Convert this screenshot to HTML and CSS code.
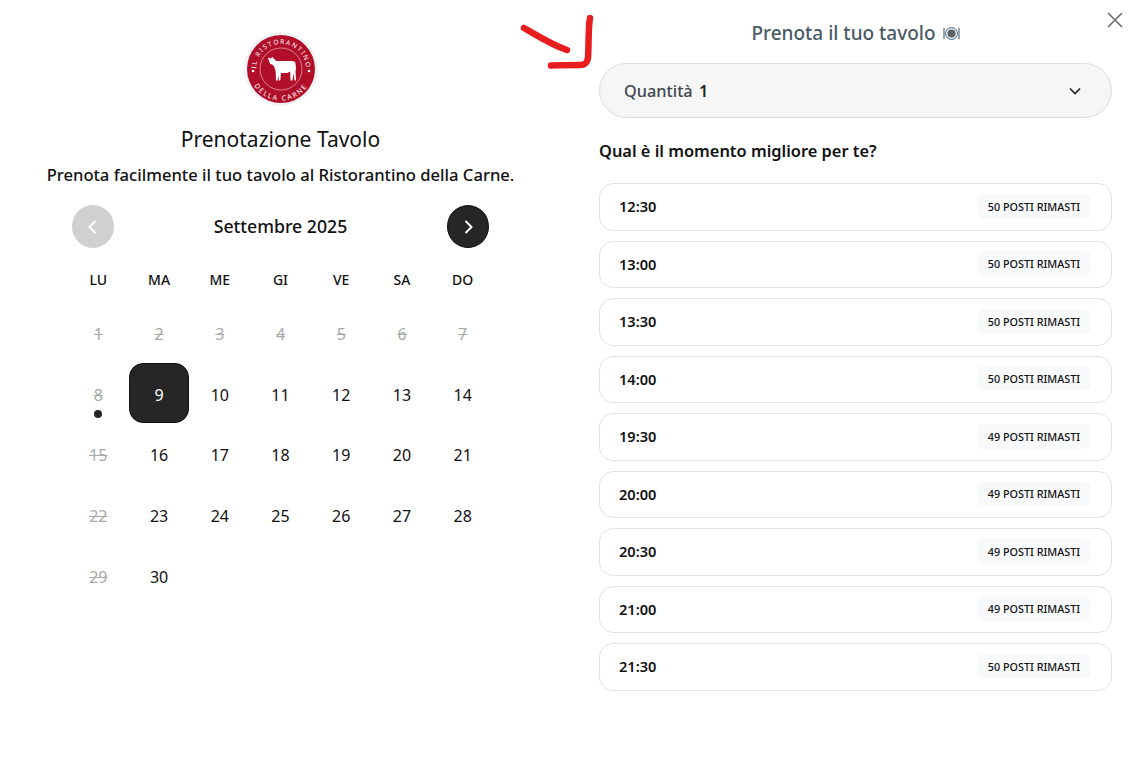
FILE: index.html
```html
<!DOCTYPE html>
<html lang="it">
<head>
<meta charset="UTF-8" />
<meta name="viewport" content="width=device-width, initial-scale=1" />
<title>Prenotazione Tavolo</title>
<link rel="stylesheet" href="styles.css">
</head>
<body>
  <main class="booking">
    <section class="intro">
      <svg class="logo" viewBox="0 0 74 74" role="img" aria-label="Il Ristorantino della Carne">
        <defs>
          <path id="arc-top" d="M12 37a25 25 0 0 1 50 0" />
          <path id="arc-bottom" d="M5.5 37a31.5 31.5 0 0 0 63 0" />
        </defs>
        <circle cx="37" cy="37" r="37" fill="#f0f2f3" />
        <circle cx="37" cy="37" r="34" fill="#b10e2a" />
        <circle cx="37" cy="37" r="21" fill="none" stroke="#eab4bc" stroke-width=".7" />
        <text class="logo-text"><textPath href="#arc-top" startOffset="50%" text-anchor="middle">IL RISTORANTINO</textPath></text>
        <text class="logo-text logo-text-low"><textPath href="#arc-bottom" startOffset="50%" text-anchor="middle">DELLA CARNE</textPath></text>
        <circle cx="9" cy="39" r="1.3" fill="#fff" />
        <circle cx="65" cy="39" r="1.3" fill="#fff" />
        <path fill="#fff" d="M24 25.5l2.5 1 2-1.5 1 1.5 3 2.5H48q3 0 3.5 2l.5 6-.5 2 .5 9.5h-1.5l-1-7-1 7h-2l-.3-9-3 1.5H37l-.7 7.5h-1.5l-.5-5-.7 5h-1.6l-.3-9-1.5-5-2-2-2-.5-1-2.5-.5-1.500z" />
      </svg>
      <h1 class="intro-title">Prenotazione Tavolo</h1>
      <p class="intro-text">Prenota facilmente il tuo tavolo al Ristorantino della Carne.</p>

      <div class="calendar">
        <div class="calendar-head">
          <button type="button" class="nav-btn nav-btn-off" aria-label="Mese precedente">
            <svg viewBox="0 0 24 24"><path d="M14.5 6l-6 6 6 6" /></svg>
          </button>
          <span class="month">Settembre 2025</span>
          <button type="button" class="nav-btn" aria-label="Mese successivo">
            <svg viewBox="0 0 24 24"><path d="M9.5 6l6 6-6 6" /></svg>
          </button>
        </div>
        <div class="weekdays">
          <span>LU</span><span>MA</span><span>ME</span><span>GI</span><span>VE</span><span>SA</span><span>DO</span>
        </div>
        <div class="days">
          <span class="day day-off">1</span>
          <span class="day day-off">2</span>
          <span class="day day-off">3</span>
          <span class="day day-off">4</span>
          <span class="day day-off">5</span>
          <span class="day day-off">6</span>
          <span class="day day-off">7</span>
          <span class="day day-off day-today">8</span>
          <span class="day day-selected">9</span>
          <span class="day">10</span>
          <span class="day">11</span>
          <span class="day">12</span>
          <span class="day">13</span>
          <span class="day">14</span>
          <span class="day day-off">15</span>
          <span class="day">16</span>
          <span class="day">17</span>
          <span class="day">18</span>
          <span class="day">19</span>
          <span class="day">20</span>
          <span class="day">21</span>
          <span class="day day-off">22</span>
          <span class="day">23</span>
          <span class="day">24</span>
          <span class="day">25</span>
          <span class="day">26</span>
          <span class="day">27</span>
          <span class="day">28</span>
          <span class="day day-off">29</span>
          <span class="day">30</span>
        </div>
      </div>
    </section>

    <section class="panel">
      <h2 class="panel-title">Prenota il tuo tavolo
        <svg class="plate" viewBox="0 0 17 13" aria-hidden="true">
          <path d="M1 1v11M16 1v11" stroke="#7c8a96" stroke-width="1.5" />
          <circle cx="8.5" cy="6.5" r="6" fill="#e8edf0" stroke="#4a6f96" />
          <circle cx="8.5" cy="6.5" r="4" fill="#5f6368" />
        </svg>
      </h2>
      <button type="button" class="quantity">
        <span>Quantità <b>1</b></span>
        <svg viewBox="0 0 24 24"><path d="M6 9l6 6 6-6" /></svg>
      </button>
      <h3 class="slots-title">Qual è il momento migliore per te?</h3>
      <ul class="slots">
        <li class="slot"><span class="slot-time">12:30</span><span class="slot-seats">50 posti rimasti</span></li>
        <li class="slot"><span class="slot-time">13:00</span><span class="slot-seats">50 posti rimasti</span></li>
        <li class="slot"><span class="slot-time">13:30</span><span class="slot-seats">50 posti rimasti</span></li>
        <li class="slot"><span class="slot-time">14:00</span><span class="slot-seats">50 posti rimasti</span></li>
        <li class="slot"><span class="slot-time">19:30</span><span class="slot-seats">49 posti rimasti</span></li>
        <li class="slot"><span class="slot-time">20:00</span><span class="slot-seats">49 posti rimasti</span></li>
        <li class="slot"><span class="slot-time">20:30</span><span class="slot-seats">49 posti rimasti</span></li>
        <li class="slot"><span class="slot-time">21:00</span><span class="slot-seats">49 posti rimasti</span></li>
        <li class="slot"><span class="slot-time">21:30</span><span class="slot-seats">50 posti rimasti</span></li>
      </ul>
    </section>
  </main>

  <button type="button" class="close" aria-label="Chiudi">
    <svg viewBox="0 0 16 16"><path d="M1 1l14 14M15 1L1 15" /></svg>
  </button>

  <!-- annotation drawn on top of the screenshot -->
  <svg class="scribble" viewBox="0 0 80 60" aria-hidden="true">
    <path d="M4 13c14 8 28 17 43 22" />
    <path d="M70 3c-2 10-1 26-2 40-1 5-3 7-8 7-10 0-20 0-29 .5" />
  </svg>
</body>
</html>
```

FILE: styles.css
```css
* {
  box-sizing: border-box;
}

body {
  margin: 0;
  font-family: 'Noto Sans', 'Open Sans', sans-serif;
  background: #fff;
  color: #111;
  overflow: hidden;
}

.booking {
  display: flex;
  height: 776px;
}

.intro {
  width: 561px;
  padding: 32px 68px 0;
  display: flex;
  flex-direction: column;
  align-items: center;
}

.logo {
  width: 74px;
  height: 74px;
}

.logo-text {
  font-size: 6.5px;
  letter-spacing: 1.5px;
  fill: #fff;
}

.logo-text-low {
  font-size: 7px;
  letter-spacing: 1.7px;
}

.intro-title {
  margin: 18px 0 0;
  font-size: 21px;
  line-height: 30px;
  font-weight: 400;
  white-space: nowrap;
}

.intro-text {
  margin: 9px 0 0;
  font-size: 16.6px;
  line-height: 24px;
  font-weight: 500;
  white-space: nowrap;
}

.calendar {
  width: 425px;
  margin-top: 18px;
}

.calendar-head {
  display: flex;
  justify-content: space-between;
  align-items: center;
  padding: 0 4px;
}

.nav-btn {
  width: 42px;
  height: 43px;
  padding: 0;
  border: 1px solid #111;
  border-radius: 50%;
  background: #262626;
  display: flex;
  align-items: center;
  justify-content: center;
}

.nav-btn svg {
  width: 24px;
  height: 24px;
  fill: none;
  stroke: #fff;
  stroke-width: 2;
}

.nav-btn-off {
  background: #d0d0d0;
  border-color: #d0d0d0;
}

.month {
  padding-bottom: 2px;
  font-size: 17.7px;
  font-weight: 500;
}

.weekdays,
.days {
  display: grid;
  grid-template-columns: repeat(7, 1fr);
  justify-items: center;
}

.weekdays {
  margin-top: 22px;
  font-size: 14px;
  line-height: 20px;
  font-weight: 500;
}

.days {
  margin-top: 12px;
  font-size: 16px;
}

.day {
  position: relative;
  width: 100%;
  aspect-ratio: 1;
  display: flex;
  align-items: center;
  justify-content: center;
  padding-top: 3px;
}

.day-off {
  color: #a9a9a9;
  text-decoration: line-through;
}

.day-today::after {
  content: "";
  position: absolute;
  left: 50%;
  bottom: 5px;
  width: 8px;
  height: 8px;
  margin-left: -4px;
  border-radius: 50%;
  background: #262626;
}

.day-selected {
  background: #262626;
  border: 1px solid #111;
  border-radius: 14px;
  color: #fff;
}

.panel {
  width: 513px;
  margin-left: 38px;
}

.panel-title {
  margin: 20px 0 0;
  display: flex;
  align-items: center;
  justify-content: center;
  gap: 7px;
  font-size: 19px;
  line-height: 26px;
  font-weight: 500;
  color: #4a5a64;
}

.plate {
  width: 17px;
  height: 13px;
  flex: none;
}

.quantity {
  width: 100%;
  height: 55px;
  margin-top: 17px;
  padding: 0 26px 0 24px;
  display: flex;
  align-items: center;
  justify-content: space-between;
  background: #f6f6f6;
  border: 1px solid #dcdcdc;
  border-radius: 28px;
  font-family: inherit;
  font-size: 16.3px;
  font-weight: 500;
  color: #3d4850;
}

.quantity b {
  margin-left: 2px;
  font-weight: 600;
  color: #222;
}

.quantity svg {
  width: 20px;
  height: 20px;
  fill: none;
  stroke: #222;
  stroke-width: 2;
}

.slots-title {
  margin: 21px 0 0;
  font-size: 16.4px;
  line-height: 24px;
  font-weight: 600;
}

.slots {
  list-style: none;
  margin: 20px 0 0;
  padding: 0;
  display: flex;
  flex-direction: column;
  gap: 10px;
}

.slot {
  height: 47.5px;
  padding: 0 20px 1px 19px;
  display: flex;
  align-items: center;
  justify-content: space-between;
  border: 1px solid #e2e2e2;
  border-radius: 14px;
}

.slot-time {
  font-size: 14.6px;
  font-weight: 600;
}

.slot-seats {
  width: 114px;
  height: 25px;
  display: flex;
  align-items: center;
  justify-content: center;
  background: #f8f9fb;
  border-radius: 6px;
  font-size: 10.8px;
  font-weight: 500;
  text-transform: uppercase;
}

.close {
  position: absolute;
  top: 12px;
  right: 9px;
  width: 16px;
  height: 16px;
  padding: 0;
  border: 0;
  background: none;
}

.close svg {
  display: block;
  fill: none;
  stroke: #6b6b6b;
  stroke-width: 1.6;
}

.scribble {
  position: absolute;
  left: 520px;
  top: 15px;
  width: 80px;
  height: 60px;
  fill: none;
  stroke: #e91c1e;
  stroke-width: 6.5;
  stroke-linecap: round;
  stroke-linejoin: round;
}
```
